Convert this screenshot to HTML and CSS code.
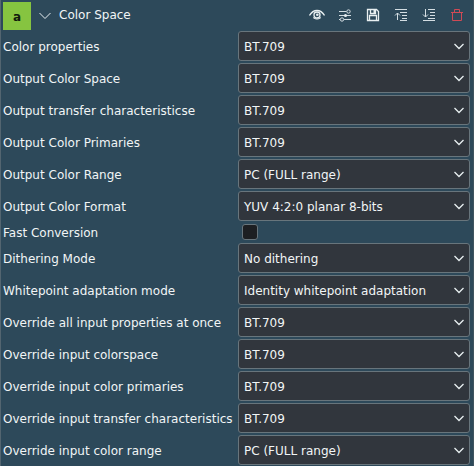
FILE: index.html
```html
<!DOCTYPE html>
<html lang="en">
<head>
<meta charset="utf-8">
<title>Color Space</title>
<link rel="stylesheet" href="styles.css">
</head>
<body>
<main class="panel">
  <header class="head">
    <span class="badge">a</span>
    <svg class="collapse" width="12" height="8" viewBox="0 0 12 8"><path d="M.5 1 6 6.500 11.500 1"/></svg>
    <h1 class="title">Color Space</h1>
    <div class="tools">
      <svg width="16" height="16" viewBox="0 0 16 16"><path class="bold" d="M.5 8.500C2.500 5 5 3.500 8 3.500s5.500 1.500 7.500 5"/><path d="M4 10.500c2.500 2 5.500 2 8 0"/><circle class="bold" cx="8" cy="8" r="3"/><circle class="solid" cx="8.300" cy="7.800" r="1.300"/></svg>
      <svg class="soft" width="16" height="16" viewBox="0 0 16 16"><path d="M2 4.500h7.500M2 8.500h12M7 12.500h7M2 12.500h1"/><circle cx="11.500" cy="4.500" r="1.700"/><circle class="solid" cx="8.500" cy="8.500" r="1.500"/><circle cx="5" cy="12.500" r="1.700"/></svg>
      <svg width="16" height="16" viewBox="0 0 16 16"><path class="bold" d="M2.500 2.500h9l2 2v9h-11zM4.500 13V8.500h7V13M5.500 3v3.500h5V3"/><path class="solid" d="M8.500 3h1.500v3H8.500z"/></svg>
      <svg class="soft" width="16" height="16" viewBox="0 0 16 16"><path d="M2 2.500h12M7 5.500h7M9 8.500h5M9 11.500h5M7 13.500h7M4.500 13V6M2 8.500 4.500 6 7 8.500"/></svg>
      <svg class="soft" width="16" height="16" viewBox="0 0 16 16"><path d="M7 2.500h7M9 5.500h5M9 8.500h5M7 11.500h7M2 13.500h12M4.500 2v8M2 7.500 4.500 10 7 7.500"/></svg>
      <svg class="trash" width="16" height="16" viewBox="0 0 16 16"><path d="M2 5.500h12M5.500 5V2.500h5V5M3.500 5.500v8h9v-8"/></svg>
    </div>
  </header>
  <section class="form" id="form"></section>
</main>
<script src="form.js"></script>
</body>
</html>
```
FILE: styles.css
```css
* { box-sizing: border-box; }
body {
  margin: 0;
  background: #2d495a;
  color: #f1f5f6;
  font: 12px/16px "DejaVu Sans", sans-serif;
}
.panel {
  height: 466px;
  overflow: hidden;
  border-left: 1px solid #536570;
  border-right: 1px solid #40545f;
}
.head {
  display: flex;
  align-items: center;
  height: 31px;
  padding: 0 8px 0 2px;
}
.badge {
  width: 28px;
  height: 28px;
  margin-top: 1px;
  background: #86c440;
  color: #111b0c;
  font-weight: bold;
  line-height: 30px;
  text-align: center;
}
.collapse { margin: 0 8px; }
.title {
  margin: 0 auto 1px 0;
  font-size: 12px;
  font-weight: normal;
}
.tools { display: flex; gap: 12px; margin-bottom: 1px; }
svg { display: block; fill: none; stroke: #e8eff1; stroke-width: 1; }
.solid { fill: #e8eff1; stroke: none; }
.bold { stroke-width: 1.3; }
.soft { stroke: #d3dde2; }
.trash { stroke: #cf4a55; }
.form { display: grid; gap: 2px; }
.row {
  display: grid;
  grid-template-columns: 235px 232px;
  align-items: center;
  height: 30px;
  padding-left: 2px;
  white-space: nowrap;
}
.row.short { height: 18px; }
.row span:not(.check) { padding-top: 2px; }
.select {
  display: flex;
  align-items: center;
  justify-content: space-between;
  height: 30px;
  padding: 0 4px 0 5px;
  border: 1px solid #68757c;
  border-radius: 3px;
  background: #31363d;
}
.select svg { stroke-width: 1.3; }
.check {
  width: 16px;
  height: 16px;
  margin-left: 4px;
  border: 1px solid #68757c;
  border-radius: 3px;
  background: #1d1f22;
}
```
FILE: form.js
```js
const rows = [
  ["Color properties", "BT.709"],
  ["Output Color Space", "BT.709"],
  ["Output transfer characteristicse", "BT.709"],
  ["Output Color Primaries", "BT.709"],
  ["Output Color Range", "PC (FULL range)"],
  ["Output Color Format", "YUV 4:2:0 planar 8-bits"],
  ["Fast Conversion", null],
  ["Dithering Mode", "No dithering"],
  ["Whitepoint adaptation mode", "Identity whitepoint adaptation"],
  ["Override all input properties at once", "BT.709"],
  ["Override input colorspace", "BT.709"],
  ["Override input color primaries", "BT.709"],
  ["Override input transfer characteristics", "BT.709"],
  ["Override input color range", "PC (FULL range)"]
];
const arrow = '<svg width="12" height="8" viewBox="0 0 12 8"><path d="M1.500 2 6 6.500 10.500 2"/></svg>';
document.getElementById("form").innerHTML = rows.map(([label, value]) =>
  value === null
    ? `<div class="row short"><span>${label}</span><span class="check"></span></div>`
    : `<div class="row"><span>${label}</span><div class="select"><span>${value}</span>${arrow}</div></div>`
).join("");
```
